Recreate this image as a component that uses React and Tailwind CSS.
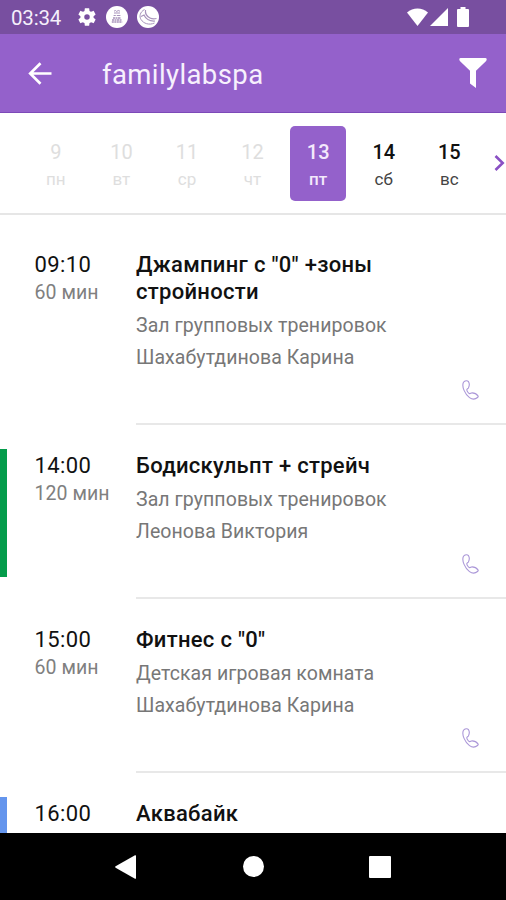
import clsx from "clsx";

const days = [
  { date: "9", label: "пн", state: "past" },
  { date: "10", label: "вт", state: "past" },
  { date: "11", label: "ср", state: "past" },
  { date: "12", label: "чт", state: "past" },
  { date: "13", label: "пт", state: "selected" },
  { date: "14", label: "сб", state: "next" },
  { date: "15", label: "вс", state: "next" },
];

const lessons = [
  {
    time: "09:10",
    duration: "60 мин",
    title: 'Джампинг с "0" +зоны стройности',
    room: "Зал групповых тренировок",
    coach: "Шахабутдинова Карина",
  },
  {
    time: "14:00",
    duration: "120 мин",
    title: "Бодискульпт + стрейч",
    room: "Зал групповых тренировок",
    coach: "Леонова Виктория",
    bar: "bg-[#049c4b]",
  },
  {
    time: "15:00",
    duration: "60 мин",
    title: 'Фитнес с "0"',
    room: "Детская игровая комната",
    coach: "Шахабутдинова Карина",
  },
  {
    time: "16:00",
    title: "Аквабайк",
    bar: "bg-[#6495ed]",
  },
];

export default function App() {
  return (
    <div className="flex h-[900px] w-[506px] flex-col overflow-hidden bg-white font-[Roboto,sans-serif]">
      <StatusBar />
      <AppBar />
      <WeekStrip />
      <main className="min-h-0 flex-1 overflow-hidden pt-[9px]">
        {lessons.map((lesson) => (
          <Lesson key={lesson.time} {...lesson} />
        ))}
      </main>
      <NavBar />
    </div>
  );
}

function StatusBar() {
  return (
    <div className="flex h-[34px] shrink-0 items-center bg-[#784fa0] pl-[11px] pr-[37px] text-white">
      <span className="w-[65px] pt-0.5 text-[20.5px] leading-none tracking-[-0.2px] text-[#f5effb]">03:34</span>
      {/* Settings */}
      <svg className="size-[22px]" viewBox="0 0 24 24" fill="currentColor">
        <path d="M19.14 12.94c.04-.3.06-.61.06-.94 0-.32-.02-.64-.07-.94l2.03-1.58c.18-.14.23-.41.12-.61l-1.92-3.32c-.12-.22-.37-.29-.59-.22l-2.39.96c-.5-.38-1.03-.7-1.62-.94l-.36-2.54c-.04-.24-.24-.41-.48-.41h-3.84c-.24 0-.43.17-.47.41l-.36 2.54c-.59.24-1.13.57-1.62.94l-2.39-.96c-.22-.08-.47 0-.59.22L2.74 8.87c-.12.21-.08.47.12.61l2.03 1.58c-.05.3-.09.63-.09.94s.02.64.07.94l-2.03 1.58c-.18.14-.23.41-.12.61l1.92 3.32c.12.22.37.29.59.22l2.39-.96c.5.38 1.03.7 1.62.94l.36 2.54c.05.24.24.41.48.41h3.84c.24 0 .44-.17.47-.41l.36-2.54c.59-.24 1.13-.56 1.62-.94l2.39.96c.22.08.47 0 .59-.22l1.92-3.32c.12-.22.07-.47-.12-.61l-2.01-1.58zM12 15a3 3 0 1 1 0-6 3 3 0 0 1 0 6z" />
      </svg>
      {/* Club notifications */}
      <svg className="ml-2 size-[22px]" viewBox="0 0 22 22" fill="none">
        <circle cx="11" cy="11" r="11" fill="#fff" />
        <path d="M8 5.2l1.5-.7 1.2 1 1.5-1 1.8.7M8 7h6M7.6 9.5h2.2m1 0h3.6" stroke="#a793bb" strokeWidth="1" />
        <path d="M7 12h8M6 14h10M5.8 16h10.4" stroke="#a793bb" strokeWidth="1.4" strokeDasharray="2 .5" />
      </svg>
      <svg className="ml-[9px] size-[22px]" viewBox="0 0 22 22" fill="none">
        <circle cx="11" cy="11" r="11" fill="#fff" />
        <path d="M7.500 3.500C3 6 2 10.500 4 13.500c2.500 4 8 6 13.500 3.500" stroke="#a793bb" strokeWidth="1" />
        <path d="M8.500 4c-.5 3.500 1.500 6.500 4.500 8 2 1 4 1 6.500.5M4 10.500l3-1.500c1.500 3.500 5.500 6.500 11 6" stroke="#a793bb" strokeWidth="1.200" />
      </svg>
      <div className="ml-auto flex items-center">
        <svg className="h-[19px] w-[21px]" viewBox="0 0 21 19" fill="currentColor">
          <path d="M0 4.500C6-1 15-1 21 4.500L10.500 18z" />
        </svg>
        <svg className="ml-0.5 size-[18px]" viewBox="0 0 18 18" fill="currentColor">
          <path d="M18 0v18H0z" />
        </svg>
        <svg className="ml-[9px] h-[20px] w-[12px]" viewBox="0 0 12 20" fill="currentColor">
          <path d="M3.500 0h5v2H11q1 0 1 1v16q0 1-1 1H1q-1 0-1-1V3q0-1 1-1h2.500z" />
        </svg>
      </div>
    </div>
  );
}

function AppBar() {
  return (
    <header className="flex h-[79px] shrink-0 items-center border-b border-[#7c49b8] bg-[#9461cb] pl-[28px] pr-[19px] text-white">
      <svg className="h-[23px] w-[24px]" viewBox="0 0 24 23" fill="none" stroke="currentColor" strokeWidth="2.700">
        <path d="M23.500 11.500H2.500M12.500 1.200L2.200 11.500l10.300 10.300" />
      </svg>
      <h1 className="ml-[50px] pt-[3px] text-[27.5px] leading-none tracking-[0.4px] text-[#f7f0fd]">familylabspa</h1>
      <svg className="ml-auto h-[30px] w-[28px]" viewBox="0 0 28 30" fill="currentColor">
        <path d="M1.500 0h25q1.500 0 1.200 1.800-.2.800-.8 1.400L17 12.800V30l-6-4.600V12.800L1.100 3.200Q.500 2.600.300 1.800 0 0 1.500 0z" />
      </svg>
    </header>
  );
}

function WeekStrip() {
  return (
    <div className="flex h-[102px] shrink-0 items-center border-b-2 border-[#e6e6e6] pl-[23px]">
      {days.map((day) => (
        <div key={day.date} className="flex w-[65.6px] shrink-0 justify-center">
          <div
            className={clsx(
              "flex h-[75px] w-[56px] flex-col items-center rounded-[5px] pt-[13px]",
              day.state === "selected" && "bg-[#9461cb] text-[#f3e9fc]",
              day.state === "past" && "text-[#dedede]",
              day.state === "next" && "text-[#111]"
            )}
          >
            <span className={clsx("text-[20px] leading-[26px]", day.state !== "past" && "font-medium")}>
              {day.date}
            </span>
            <span
              className={clsx(
                "mt-0.5 text-[17px] leading-[24px]",
                day.state === "selected" && "font-medium",
                day.state === "next" && "text-[#444]"
              )}
            >
              {day.label}
            </span>
          </div>
        </div>
      ))}
      <svg className="ml-[12px] h-[16px] w-[11px] shrink-0" viewBox="0 0 11 16" fill="none" stroke="#8a50c4" strokeWidth="2.600">
        <path d="M1.500 1L8.700 8l-7.200 7" />
      </svg>
    </div>
  );
}

function Lesson({ time, duration, title, room, coach, bar }) {
  return (
    <article className="flex">
      <div className={clsx("mt-6 h-[128px] w-[7px] shrink-0", bar)} />
      <div className="w-[129px] shrink-0 pl-[27.5px] pt-[27px]">
        <p className="text-[22px] font-[450] leading-[27px] tracking-[0.4px] text-[#111]">{time}</p>
        {duration && (
          <p className="mt-px text-[19.5px] leading-[28px] tracking-[0.05px] text-[#808080]">{duration}</p>
        )}
      </div>
      <div className="flex-1 border-b-2 border-[#e8e8e8] pt-[27px]">
        <h2 className="w-[270px] text-[22px] font-medium leading-[27px] tracking-[0.3px] text-[#111]">{title}</h2>
        {room && (
          <div className="mt-[5px] text-[19.5px] leading-[32px] tracking-[0.07px] text-[#777]">
            <p>{room}</p>
            <p>{coach}</p>
          </div>
        )}
        <div className="flex h-[49px] justify-end pr-[27px] pt-[6px]">
          <PhoneIcon />
        </div>
      </div>
    </article>
  );
}

function PhoneIcon() {
  return (
    <svg className="h-[20px] w-[17px]" viewBox="0 0 17 20" fill="none" stroke="#ab97d8" strokeWidth="1.100" strokeLinejoin="round">
      <path d="M1.500 2.200C2.800.4 5.400.2 6.500 1.700c1 1.700.9 4.300-.1 6.200-.5.900-1.600.9-1.600 1.800 0 1.300 1.500 3.500 2.800 3.900.9.300 1.200-.7 2.200-.7 2.300-.1 4.800 1.100 6.200 2.900.5.700.1 1.200-.5 1.700-2.300 2-5.500 1.900-8 .1C3.200 14.500-.7 6.500 1.500 2.200z" />
    </svg>
  );
}

function NavBar() {
  return (
    <nav className="flex h-[67px] shrink-0 items-center bg-black pl-[115px] text-white">
      <svg className="h-[24px] w-[21px]" viewBox="0 0 21 24" fill="currentColor">
        <path d="M20 .3q1-.5 1 .7v22q0 1.200-1 .7L.600 12.700Q-.400 12 .600 11.300z" />
      </svg>
      <div className="ml-[107px] size-[21px] rounded-full bg-white" />
      <div className="ml-[105px] size-[22px] rounded-[1px] bg-white" />
    </nav>
  );
}
